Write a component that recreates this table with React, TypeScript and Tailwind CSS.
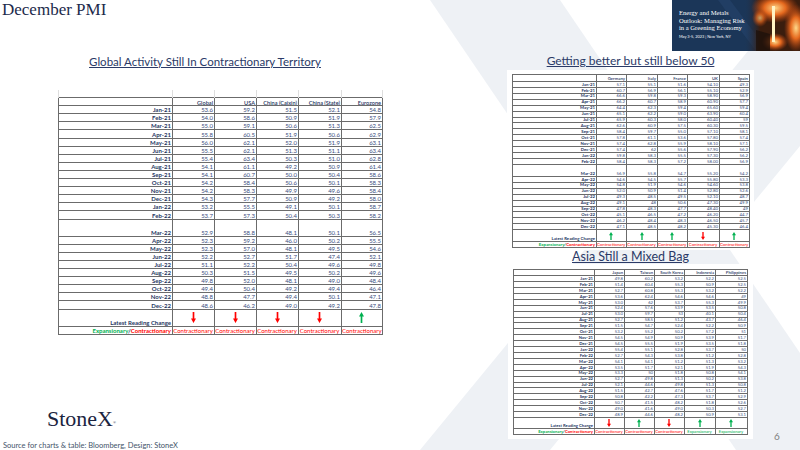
import React from "react";

type Cfg = {
  headers: string[];
  widths: string[];
  tableW: string;
  spacerH?: string;
  headH: string;
  rowH: string;
  tallH?: string;
  latestH: string;
  footH: string;
  size: string;
  headSize: string;
  arrow: string;
  arrows: boolean[];
  foot: boolean[];
  rows: string[][];
};

const globalCfg: Cfg = {
  headers: ["Global", "USA", "China (Caixin)", "China (State)", "Eurozone"],
  widths: ["w-[114px]", "w-[42px]", "w-[42px]", "w-[42px]", "w-[43px]", "w-[41px]"],
  tableW: "w-[324px]",
  spacerH: "h-[7px]",
  headH: "h-[8.7px]",
  rowH: "h-[8.1px]",
  tallH: "h-[17.2px]",
  latestH: "h-[17.5px]",
  footH: "h-[8px]",
  size: "text-[6px]",
  headSize: "text-[5.6px]",
  arrow: "h-[11px] w-[5px]",
  arrows: [false, false, false, false, true],
  foot: [false, false, false, false, false],
  rows: [
    ["Jan-21", "53.6", "59.2", "51.5", "52.1", "54.8"],
    ["Feb-21", "54.0", "58.6", "50.9", "51.9", "57.9"],
    ["Mar-21", "55.0", "59.1", "50.6", "51.3", "62.5"],
    ["Apr-21", "55.8", "60.5", "51.9", "50.6", "62.9"],
    ["May-21", "56.0", "62.1", "52.0", "51.9", "63.1"],
    ["Jun-21", "55.5", "62.1", "51.3", "51.1", "63.4"],
    ["Jul-21", "55.4", "63.4", "50.3", "51.0", "62.8"],
    ["Aug-21", "54.1", "61.1", "49.2", "50.9", "61.4"],
    ["Sep-21", "54.1", "60.7", "50.0", "50.4", "58.6"],
    ["Oct-21", "54.2", "58.4", "50.6", "50.1", "58.3"],
    ["Nov-21", "54.2", "58.3", "49.9", "49.6", "58.4"],
    ["Dec-21", "54.3", "57.7", "50.9", "49.2", "58.0"],
    ["Jan-22", "53.2", "55.5", "49.1", "50.1", "58.7"],
    ["Feb-22", "53.7", "57.3", "50.4", "50.3", "58.2"],
    ["Mar-22", "52.9", "58.8", "48.1", "50.1", "56.5"],
    ["Apr-22", "52.3", "59.2", "46.0", "50.2", "55.5"],
    ["May-22", "52.3", "57.0", "48.1", "49.5", "54.6"],
    ["Jun-22", "52.2", "52.7", "51.7", "47.4", "52.1"],
    ["Jul-22", "51.1", "52.2", "50.4", "49.6", "49.8"],
    ["Aug-22", "50.3", "51.5", "49.5", "50.2", "49.6"],
    ["Sep-22", "49.8", "52.0", "48.1", "49.0", "48.4"],
    ["Oct-22", "49.4", "50.4", "49.2", "49.4", "46.4"],
    ["Nov-22", "48.8", "47.7", "49.4", "50.1", "47.1"],
    ["Dec-22", "48.6", "46.2", "49.0", "49.2", "47.8"],
  ],
};

const europeCfg: Cfg = {
  headers: ["Germany", "Italy", "France", "UK", "Spain"],
  widths: ["w-[84px]", "w-[30px]", "w-[31px]", "w-[30px]", "w-[32px]", "w-[30px]"],
  tableW: "w-[237px]",
  headH: "h-[7px]",
  rowH: "h-[5.93px]",
  tallH: "h-[12px]",
  latestH: "h-[12px]",
  footH: "h-[6px]",
  size: "text-[4.3px]",
  headSize: "text-[4.3px]",
  arrow: "h-[8px] w-[4px]",
  arrows: [true, true, true, false, true],
  foot: [false, false, false, false, false],
  rows: [
    ["Jan-21", "57.1", "55.1", "51.6", "54.10", "49.3"],
    ["Feb-21", "60.7", "56.9", "56.1", "55.10", "52.9"],
    ["Mar-21", "66.6", "59.8", "59.3", "58.90", "56.9"],
    ["Apr-21", "66.2", "60.7", "58.9", "60.90", "57.7"],
    ["May-21", "64.4", "62.3", "59.4", "65.60", "59.4"],
    ["Jun-21", "65.1", "62.2", "59.0", "63.90", "60.4"],
    ["Jul-21", "65.9", "60.3", "58.0", "60.40", "59"],
    ["Aug-21", "62.6", "60.9", "57.5", "60.30", "59.5"],
    ["Sep-21", "58.4", "59.7", "55.0", "57.10", "58.1"],
    ["Oct-21", "57.8", "61.1", "53.6", "57.80", "57.4"],
    ["Nov-21", "57.4", "62.8", "55.9", "58.10", "57.1"],
    ["Dec-21", "57.4", "62", "55.6", "57.90", "56.2"],
    ["Jan-22", "59.8", "58.3", "55.5", "57.30", "56.2"],
    ["Feb-22", "58.4", "58.3", "57.2", "58.00", "56.9"],
    ["Mar-22", "56.9", "55.8", "54.7", "55.20", "54.2"],
    ["Apr-22", "54.6", "54.5", "55.7", "55.80", "53.3"],
    ["May-22", "54.8", "51.9", "54.6", "54.60", "53.8"],
    ["Jun-22", "52.0", "50.9", "51.4", "52.80", "52.6"],
    ["Jul-22", "49.3", "48.5", "49.5", "52.10", "48.7"],
    ["Aug-22", "49.1", "48", "50.6", "47.30", "49.9"],
    ["Sep-22", "47.8", "48.3", "47.7", "48.40", "49"],
    ["Oct-22", "45.1", "46.5", "47.2", "46.20", "44.7"],
    ["Nov-22", "46.2", "48.4", "48.3", "46.50", "45.7"],
    ["Dec-22", "47.1", "48.5", "48.2", "45.30", "46.4"],
  ],
};

const asiaCfg: Cfg = {
  headers: ["Japan", "Taiwan", "South Korea", "Indonesia", "Philippines"],
  widths: ["w-[81px]", "w-[30px]", "w-[30px]", "w-[30px]", "w-[31px]", "w-[32px]"],
  tableW: "w-[234px]",
  headH: "h-[6px]",
  rowH: "h-[5.92px]",
  latestH: "h-[11px]",
  footH: "h-[6px]",
  size: "text-[4.2px]",
  headSize: "text-[4.2px]",
  arrow: "h-[8px] w-[4px]",
  arrows: [false, true, false, true, true],
  foot: [false, false, false, true, true],
  rows: [
    ["Jan-21", "49.8", "60.2", "53.2", "52.2", "52.5"],
    ["Feb-21", "51.4", "60.4", "55.3", "50.9", "52.5"],
    ["Mar-21", "52.7", "60.8", "55.3", "53.2", "52.2"],
    ["Apr-21", "53.6", "62.4", "54.6", "54.6", "49"],
    ["May-21", "53.0", "62", "53.7", "55.3", "49.9"],
    ["Jun-21", "52.4", "57.6", "53.9", "53.5", "50.8"],
    ["Jul-21", "53.0", "59.7", "53", "40.1", "50.4"],
    ["Aug-21", "52.7", "58.5", "51.2", "43.7", "46.4"],
    ["Sep-21", "51.5", "54.7", "52.4", "52.2", "50.9"],
    ["Oct-21", "53.2", "55.2", "50.2", "57.2", "51"],
    ["Nov-21", "54.5", "54.9", "50.9", "53.9", "51.7"],
    ["Dec-21", "54.5", "55.5", "51.9", "53.5", "51.8"],
    ["Jan-22", "55.4", "55.1", "52.8", "53.7", "50"],
    ["Feb-22", "52.7", "54.3", "53.8", "51.2", "52.8"],
    ["Mar-22", "54.1", "54.1", "51.2", "51.3", "53.2"],
    ["Apr-22", "53.5", "51.7", "52.1", "51.9", "54.3"],
    ["May-22", "53.3", "50", "51.8", "50.8", "54.1"],
    ["Jun-22", "52.7", "49.8", "51.3", "50.2", "53.8"],
    ["Jul-22", "52.1", "44.6", "49.8", "51.3", "50.8"],
    ["Aug-22", "51.5", "42.7", "47.6", "51.7", "51.2"],
    ["Sep-22", "50.8", "42.2", "47.3", "53.7", "52.9"],
    ["Oct-22", "50.7", "41.5", "48.2", "51.8", "52.6"],
    ["Nov-22", "49.0", "41.6", "49.0", "50.3", "52.7"],
    ["Dec-22", "48.9", "44.6", "48.2", "50.9", "53.1"],
  ],
};

function Arrow({ up, className }: { up: boolean; className: string }) {
  return (
    <svg viewBox="0 0 6 12" className={`mx-auto block ${className}`} preserveAspectRatio="none">
      {up ? (
        <path d="M3 0l3 5H4v7H2V5H0z" fill="#00b050" />
      ) : (
        <path d="M2 0h2v7h2l-3 5-3-5h2z" fill="#ff0000" />
      )}
    </svg>
  );
}

function PmiTable({ cfg }: { cfg: Cfg }) {
  const cell = "overflow-hidden whitespace-nowrap border border-[#6b6b6b] p-0 pr-[1px] text-right align-bottom";
  return (
    <table className={`table-fixed leading-none ${cfg.tableW} ${cfg.size}`}>
      <colgroup>
        {cfg.widths.map((w, i) => (
          <col key={i} className={w} />
        ))}
      </colgroup>
      <tbody>
        {cfg.spacerH && (
          <tr className={cfg.spacerH}>
            {cfg.widths.map((_, i) => (
              <td key={i} className="border-x border-[#dedede] p-0" />
            ))}
          </tr>
        )}
        <tr className={cfg.headH}>
          <td className={cell} />
          {cfg.headers.map((h) => (
            <td key={h} className={`${cell} ${cfg.headSize} font-semibold text-[#1f3763] underline`}>
              {h}
            </td>
          ))}
        </tr>
        {cfg.rows.map((r) => (
          <tr key={r[0]} className={cfg.tallH && r[0] === "Mar-22" ? cfg.tallH : cfg.rowH}>
            <td className={`${cell} font-bold text-[#1f3763]`}>{r[0]}</td>
            {r.slice(1).map((v, i) => (
              <td key={i} className={`${cell} text-[#3a4e7e]`}>
                {v}
              </td>
            ))}
          </tr>
        ))}
        <tr className={cfg.latestH}>
          <td className={`${cell} font-bold text-[#1f3763]`}>Latest Reading Change</td>
          {cfg.arrows.map((up, i) => (
            <td key={i} className={`${cell} !align-middle`}>
              <Arrow up={up} className={cfg.arrow} />
            </td>
          ))}
        </tr>
        <tr className={cfg.footH}>
          <td className={`${cell} font-bold`}>
            <span className="text-[#00b050]">Expansionary</span>
            <span className="text-[#1f3763]">/</span>
            <span className="text-[#ff0000]">Contractionary</span>
          </td>
          {cfg.foot.map((exp, i) => (
            <td key={i} className={`${cell} !text-center ${exp ? "text-[#00b050]" : "text-[#ff0000]"}`}>
              {exp ? "Expansionary" : "Contractionary"}
            </td>
          ))}
        </tr>
      </tbody>
    </table>
  );
}

function Watermark() {
  return (
    <svg className="absolute inset-0" width="800" height="450" viewBox="0 0 800 450">
      <path d="M430 0h130l306 450H736z" fill="#eef1f5" />
      <path d="M790 0h130L550 450H420z" fill="#eef1f5" />
    </svg>
  );
}

function Banner() {
  return (
    <div className="relative h-[51px] w-[128px] shrink-0 overflow-hidden bg-[#1b3658]">
      <svg className="absolute inset-0" width="128" height="51" viewBox="0 0 128 51">
        <defs>
          <linearGradient id="fireFade" x1="0" x2="1" y1="0" y2="0">
            <stop offset="0" stopColor="#1b3658" stopOpacity="0" />
            <stop offset="1" stopColor="#3a1d0e" />
          </linearGradient>
          <radialGradient id="fireGlow" cx="0.5" cy="0.5" r="0.5">
            <stop offset="0" stopColor="#ffd98a" />
            <stop offset="0.45" stopColor="#ee6d1f" stopOpacity="0.95" />
            <stop offset="1" stopColor="#b8400f" stopOpacity="0" />
          </radialGradient>
        </defs>
        <path d="M46 0h12l38 51H84z" fill="#23426a" opacity="0.7" />
        <rect x="72" y="0" width="16" height="51" fill="url(#fireFade)" />
        <rect x="88" y="0" width="40" height="51" fill="#3a1d0e" />
        <ellipse cx="103" cy="8" rx="24" ry="15" fill="url(#fireGlow)" />
        <ellipse cx="124" cy="28" rx="12" ry="24" fill="url(#fireGlow)" />
        <ellipse cx="103" cy="42" rx="13" ry="9" fill="url(#fireGlow)" />
        <ellipse cx="88" cy="18" rx="8" ry="9" fill="url(#fireGlow)" opacity="0.7" />
        <path d="M84 30l14 4v17H84z" fill="#1e120b" opacity="0.8" />
        <rect x="100" y="6" width="3" height="36" fill="#fff3c4" />
      </svg>
      <div className="relative pl-[7px] pt-[9px] text-white">
        <p className="text-[6.6px] leading-[7.5px] [font-family:'Liberation_Serif',serif]">
          Energy and Metals
          <br />
          Outlook: Managing Risk
          <br />
          in a Greening Economy
        </p>
        <p className="mt-[2px] text-[3.9px] leading-[5px]">May 3-5, 2023 | New York, NY</p>
      </div>
    </div>
  );
}

export default function App() {
  return (
    <div className="relative h-[450px] w-[800px] overflow-hidden bg-white [font-family:Lato,sans-serif]">
      <Watermark />
      <div className="relative flex h-full flex-col">
        {/* Header */}
        <header className="flex h-[51px] shrink-0 items-start justify-between">
          <h1 className="ml-[2px] text-[17px] leading-[20px] text-[#1c2a4b] [font-family:'Liberation_Serif',serif]">
            December PMI
          </h1>
          <Banner />
        </header>

        <div className="flex min-h-0 flex-1">
          {/* Left: global table + footer */}
          <section className="flex w-[420px] flex-col">
            <h2 className="ml-[58px] mt-[4px] w-[294px] text-center text-[11.5px] leading-[14px] text-[#2b3a67] underline">
              Global Activity Still In Contractionary Territory
            </h2>
            <div className="ml-[58px] mt-[21px]">
              <PmiTable cfg={globalCfg} />
            </div>
            <div className="ml-[47px] mt-auto text-[22px] leading-[22px] text-[#1b2440] [font-family:'Liberation_Serif',serif]">
              StoneX<sup className="text-[4px]">®</sup>
            </div>
            <p className="ml-[3px] mt-[11px] text-[7.5px] leading-[9px] text-[#44546a]">
              Source for charts &amp; table: Bloomberg, Design: StoneX
            </p>
          </section>

          {/* Right: Europe + Asia tables */}
          <section className="ml-[87px] flex w-[247px] flex-col">
            <h2 className="mt-[3px] text-center text-[12px] leading-[14px] text-[#2b3a67] underline">
              Getting better but still below 50
            </h2>
            <div className="mt-[2px] bg-white px-[5px] pb-[2px] pt-[4px]">
              <PmiTable cfg={europeCfg} />
            </div>
            <h2 className="text-center text-[12.5px] leading-[14px] text-[#2b3a67] underline">Asia Still a Mixed Bag</h2>
            <div className="ml-[1px] w-fit bg-white px-[5px] pb-[4px] pt-[5px]">
              <PmiTable cfg={asiaCfg} />
            </div>
          </section>

          <div className="flex flex-1 flex-col items-center justify-end pb-[8px]">
            <span className="text-[10px] leading-[12px] text-[#808080]">6</span>
          </div>
        </div>
      </div>
    </div>
  );
}
